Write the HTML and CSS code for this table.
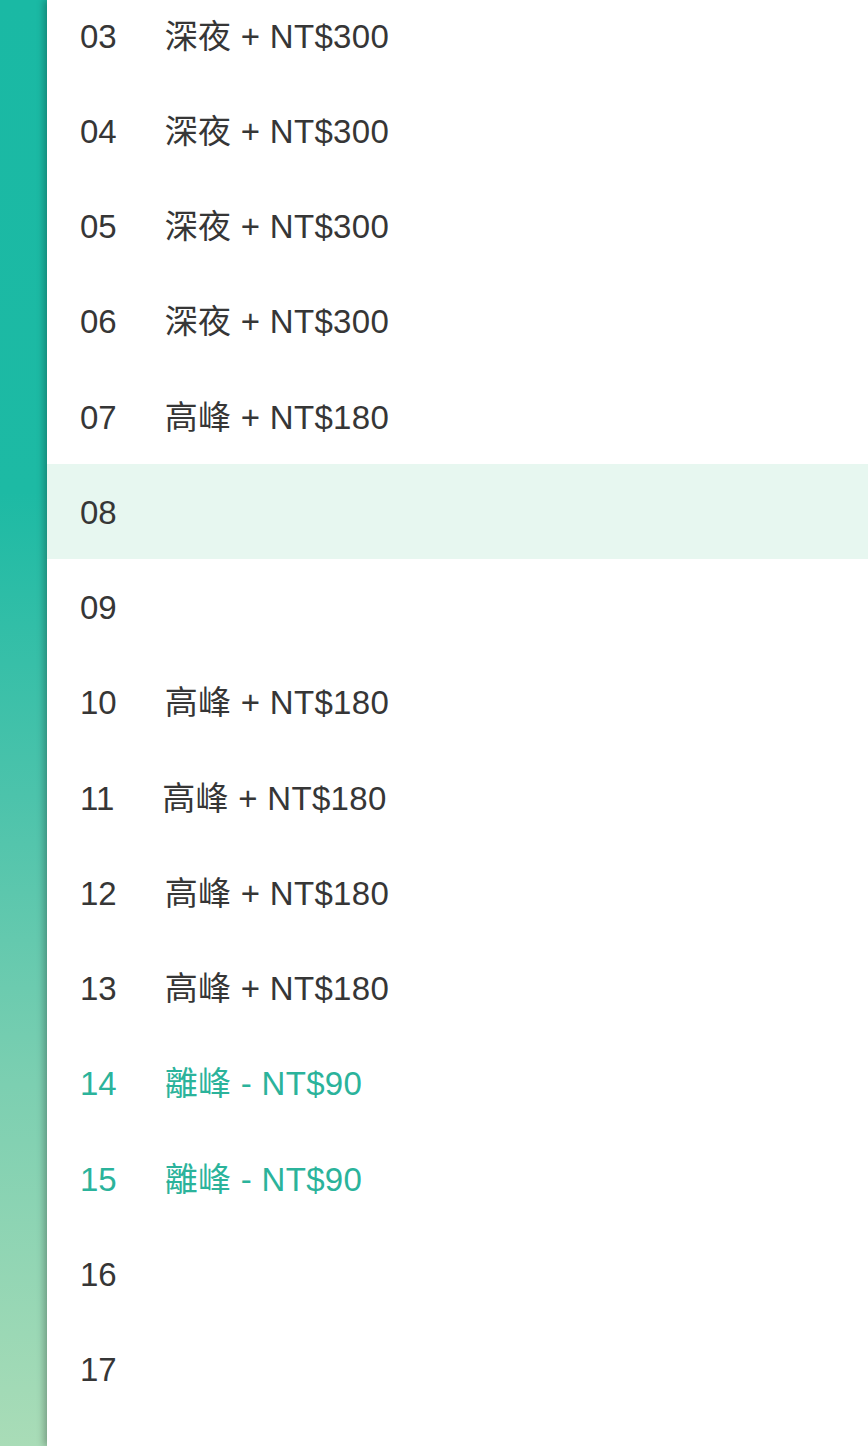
FILE: index.html
```html
<!DOCTYPE html>
<html lang="zh-Hant">
<head>
<meta charset="utf-8">
<link rel="stylesheet" href="styles.css">
</head>
<body>
<div class="app">
  <aside class="sidebar"></aside>
  <main class="panel">
    <ul class="hours">
      <li class="row"><span class="num">03</span><span class="label">深夜 + NT$300</span></li>
      <li class="row"><span class="num">04</span><span class="label">深夜 + NT$300</span></li>
      <li class="row"><span class="num">05</span><span class="label">深夜 + NT$300</span></li>
      <li class="row"><span class="num">06</span><span class="label">深夜 + NT$300</span></li>
      <li class="row"><span class="num">07</span><span class="label">高峰 + NT$180</span></li>
      <li class="row selected"><span class="num">08</span></li>
      <li class="row"><span class="num">09</span></li>
      <li class="row"><span class="num">10</span><span class="label">高峰 + NT$180</span></li>
      <li class="row"><span class="num">11</span><span class="label">高峰 + NT$180</span></li>
      <li class="row"><span class="num">12</span><span class="label">高峰 + NT$180</span></li>
      <li class="row"><span class="num">13</span><span class="label">高峰 + NT$180</span></li>
      <li class="row offpeak"><span class="num">14</span><span class="label">離峰 - NT$90</span></li>
      <li class="row offpeak"><span class="num">15</span><span class="label">離峰 - NT$90</span></li>
      <li class="row"><span class="num">16</span></li>
      <li class="row"><span class="num">17</span></li>
    </ul>
  </main>
</div>
</body>
</html>
```

FILE: styles.css
```css
html, body {
  margin: 0;
  padding: 0;
  height: 100%;
  overflow: hidden;
  background: #ffffff;
}

.app {
  display: flex;
  height: 1446px;
  font-family: "Liberation Sans", "Noto Sans CJK TC", sans-serif;
}

.sidebar {
  width: 47px;
  flex: 0 0 47px;
  background: linear-gradient(to bottom, #1ab9a4 0%, #1dbaa4 34%, #4cc3ab 55%, #7ccfb1 75%, #a9dcb7 100%);
}

.panel {
  flex: 1;
  background: #ffffff;
  box-shadow: -3px 0 7px rgba(0, 0, 0, 0.28);
  position: relative;
  z-index: 1;
  overflow: hidden;
}

.hours {
  list-style: none;
  margin: -12.5px 0 0 0;
  padding: 0;
}

.row {
  display: flex;
  align-items: baseline;
  gap: 48px;
  height: 92.25px;
  padding-top: 3px;
  line-height: 92.25px;
  padding-left: 33px;
  font-size: 33px;
  color: #363636;
}

.row.selected {
  background: #e7f7f0;
}

.row.offpeak {
  color: #2bb39b;
}

.label {
  letter-spacing: 0.3px;
}
```
